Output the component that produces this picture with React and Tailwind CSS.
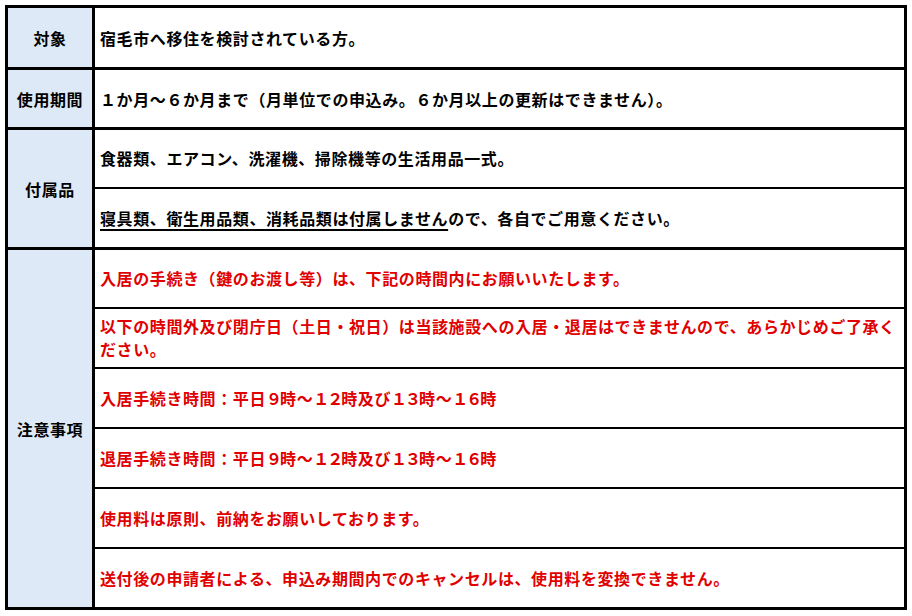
import React from "react";

const font = {
  fontFamily: '"Noto Sans CJK JP", "Noto Sans", sans-serif',
};

function Cell({ children, red, first }) {
  return (
    <div
      className={`flex items-center pl-[5px] pr-[2px] leading-[23px] ${
        first ? "h-[57px]" : "h-[60px] border-t-2 border-black"
      } ${red ? "text-[#e00000]" : "text-black"}`}
    >
      <div>{children}</div>
    </div>
  );
}

function Label({ children }) {
  return (
    <div className="w-[87px] shrink-0 border-r-[3px] border-black bg-[#dde9f6] flex items-center justify-center text-black">
      {children}
    </div>
  );
}

function D({ children }) {
  return <span className="tracking-[-2px]">{children}</span>;
}

export default function App() {
  return (
    <div className="bg-white w-[912px] h-[616px] pt-[5px] pl-[5px]" style={font}>
      <div className="w-[902px] border-[3px] border-black flex flex-col text-[16px] font-bold tracking-[0.6px]">
        {/* 対象 */}
        <div className="flex h-[59px]">
          <Label>対象</Label>
          <div className="flex-1 flex items-center pl-[5px]">
            宿毛市へ移住を検討されている方。
          </div>
        </div>
        {/* 使用期間 */}
        <div className="flex h-[60px] border-t-[3px] border-black">
          <Label>使用期間</Label>
          <div className="flex-1 flex items-center pl-[5px]">
            １か月～６か月まで（月単位での申込み。６か月以上の更新はできません）。
          </div>
        </div>
        {/* 付属品 */}
        <div className="flex h-[120px] border-t-[3px] border-black">
          <Label>付属品</Label>
          <div className="flex-1 flex flex-col">
            <Cell first>食器類、エアコン、洗濯機、掃除機等の生活用品一式。</Cell>
            <Cell>
              <span className="underline decoration-[1.5px] underline-offset-[4px]">
                寝具類、衛生用品類、消耗品類は付属しません
              </span>
              ので、各自でご用意ください。
            </Cell>
          </div>
        </div>
        {/* 注意事項 */}
        <div className="flex h-[360px] border-t-[3px] border-black">
          <Label>注意事項</Label>
          <div className="flex-1 flex flex-col">
            <Cell first red>
              入居の手続き（鍵のお渡し等）は、下記の時間内にお願いいたします。
            </Cell>
            <Cell red>
              以下の時間外及び閉庁日（土日・祝日）は当該施設への入居・退居はできませんので、あらかじめご了承ください。
            </Cell>
            <Cell red>
              入居手続き時間：平日<D>９</D>時～<D>１２</D>時及び<D>１３</D>時～<D>１６</D>時
            </Cell>
            <Cell red>
              退居手続き時間：平日<D>９</D>時～<D>１２</D>時及び<D>１３</D>時～<D>１６</D>時
            </Cell>
            <Cell red>使用料は原則、前納をお願いしております。</Cell>
            <Cell red>
              送付後の申請者による、申込み期間内でのキャンセルは、使用料を変換できません。
            </Cell>
          </div>
        </div>
      </div>
    </div>
  );
}
